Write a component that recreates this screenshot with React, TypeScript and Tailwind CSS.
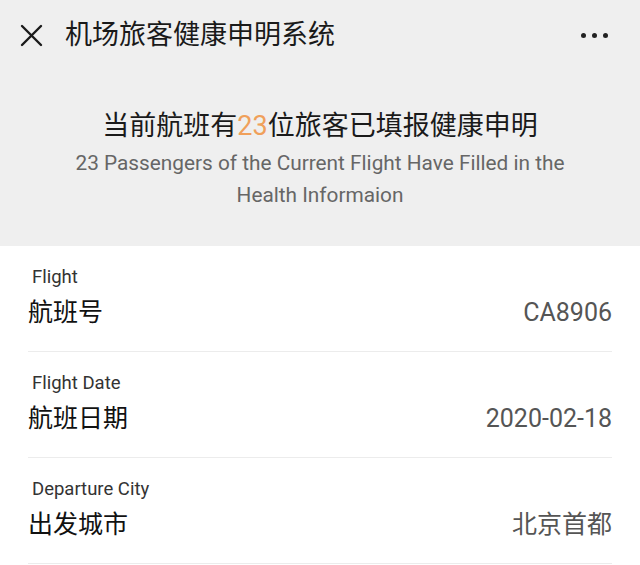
import React from "react"

const rows = [
    { en: "Flight", cn: "航班号", value: "CA8906" },
    { en: "Flight Date", cn: "航班日期", value: "2020-02-18" },
    { en: "Departure City", cn: "出发城市", value: "北京首都" },
]

const App = () => {
    return (
        <div className="w-[640px] h-[565px] overflow-hidden bg-white text-[#111]" style={{ fontFamily: "Roboto, 'Noto Sans CJK SC', sans-serif" }}>
            <div className="bg-[#efefef]">
                {/* top bar */}
                <div className="h-[70px] flex items-center pl-[20px] pr-[32px]">
                    <svg width="23" height="23" viewBox="0 0 23 23" className="shrink-0">
                        <path d="M2 2 L21 21 M21 2 L2 21" stroke="#1a1a1a" strokeWidth="2.4" strokeLinecap="round" />
                    </svg>
                    <div className="ml-[22px] text-[27px] leading-none text-[#1a1a1a]">机场旅客健康申明系统</div>
                    <div className="ml-auto flex gap-[6px] items-center">
                        <span className="w-[5px] h-[5px] rounded-full bg-[#222]"></span>
                        <span className="w-[5px] h-[5px] rounded-full bg-[#222]"></span>
                        <span className="w-[5px] h-[5px] rounded-full bg-[#222]"></span>
                    </div>
                </div>
                <div className="flex flex-col items-center text-center pt-[38px] pb-[35px]">
                    <div className="text-[27px] leading-[36px] text-[#1a1a1a]">
                        当前航班有<span className="text-[#f0a05a]">23</span>位旅客已填报健康申明
                    </div>
                    <div className="mt-[3px] text-[20.8px] leading-[32px] text-[#666] w-[520px]">
                        23 Passengers of the Current Flight Have Filled in the Health Informaion
                    </div>
                </div>
            </div>
            <div className="px-[28px]">
                {rows.map((row, i) => (
                    <div key={i} className="pt-[21px] pb-[22px] border-b border-[#ececec]">
                        <div className="text-[18.5px] leading-[20px] text-[#333] pl-[4px]">{row.en}</div>
                        <div className="mt-[10px] flex justify-between items-center h-[32px]">
                            <span className="text-[25px] text-[#111]">{row.cn}</span>
                            <span className="text-[25px] text-[#555]">{row.value}</span>
                        </div>
                    </div>
                ))}
            </div>
        </div>
    )
}

export default App
